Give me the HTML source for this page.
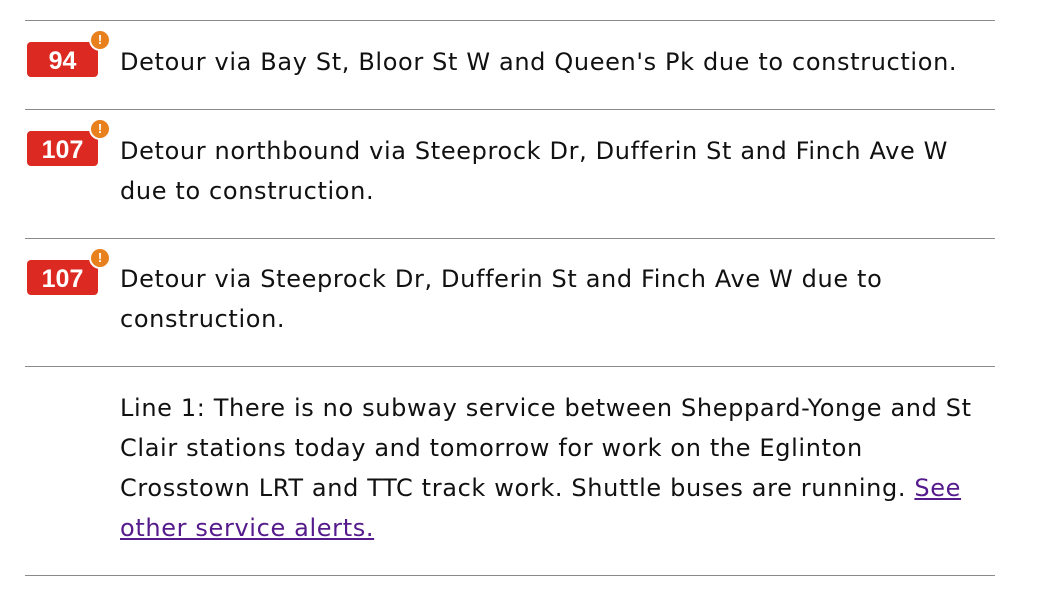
<!DOCTYPE html>
<html><head><style>
body{margin:0;background:#fff;font-family:"DejaVu Sans","Liberation Sans",sans-serif;}
.row{position:absolute;left:25px;width:970px;border-top:1px solid #8a8a8a;}
.txt{position:absolute;left:95px;width:866px;font-size:24px;letter-spacing:0.64px;line-height:40px;color:#111;}
.b{position:absolute;left:2px;width:71px;height:35px;background:#dc2a22;border-radius:4px;color:#fff;font-weight:bold;font-size:25px;line-height:39px;text-align:center;font-family:"Liberation Sans",sans-serif;}
.d{position:absolute;left:62px;top:-13px;width:18px;height:18px;border-radius:50%;background:#e8801e;border:2px solid #fff;color:#fff;font-size:13px;line-height:18px;text-align:center;font-weight:bold;}
a{color:#551a8b;}
.end{position:absolute;left:25px;width:970px;top:575px;border-top:1px solid #8a8a8a;}
</style></head><body>
<div class="row" style="top:20px"><div class="b" style="top:21px">94<div class="d">!</div></div><div class="txt" style="top:21px">Detour via Bay St, Bloor St W and Queen's Pk due to construction.</div></div>
<div class="row" style="top:109px"><div class="b" style="top:21px">107<div class="d">!</div></div><div class="txt" style="top:21px">Detour northbound via Steeprock Dr, Dufferin St and Finch Ave W due to construction.</div></div>
<div class="row" style="top:238px"><div class="b" style="top:21px">107<div class="d">!</div></div><div class="txt" style="top:20px">Detour via Steeprock Dr, Dufferin St and Finch Ave W due to construction.</div></div>
<div class="row" style="top:366px"><div class="txt" style="top:21px">Line 1: There is no subway service between Sheppard-Yonge and St Clair stations today and tomorrow for work on the Eglinton Crosstown LRT and TTC track work. Shuttle buses are running. <a href="#">See other service alerts.</a></div></div>
<div class="end"></div>
</body></html>
